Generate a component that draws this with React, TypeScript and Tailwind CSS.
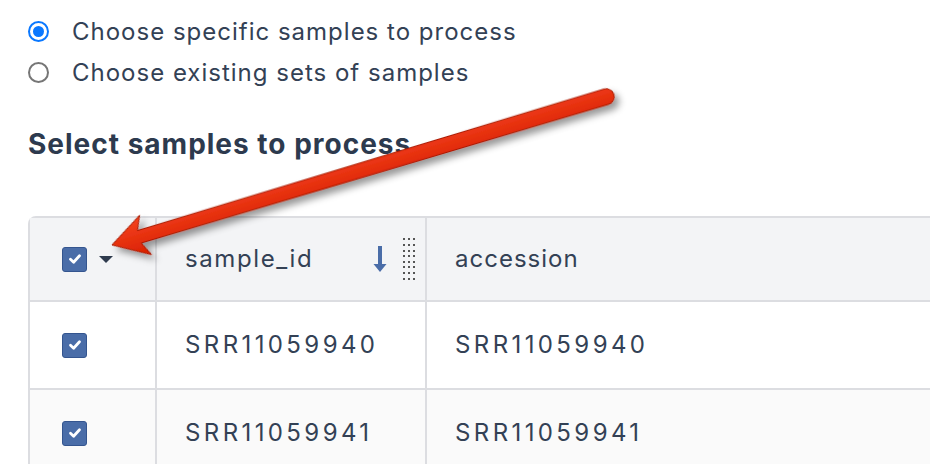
import { useState } from 'react';

const rows = [
  { id: 'SRR11059940', accession: 'SRR11059940' },
  { id: 'SRR11059941', accession: 'SRR11059941' },
];

function CheckBox() {
  return (
    <span className="flex h-[25px] w-[25px] items-center justify-center rounded-[3px] border border-[#34558f] bg-[#4a6da8]">
      <svg width="16" height="16" viewBox="0 0 16 16">
        <path d="M3.5 8.3 L6.6 11.2 L12.5 4.8" fill="none" stroke="white" strokeWidth="2.8" strokeLinecap="round" strokeLinejoin="round" />
      </svg>
    </span>
  );
}

function Radio({ checked }: { checked: boolean }) {
  return checked ? (
    <span className="flex h-[21px] w-[21px] items-center justify-center rounded-full border-[2.5px] border-[#0a78ff]">
      <span className="h-[11px] w-[11px] rounded-full bg-[#0a78ff]" />
    </span>
  ) : (
    <span className="h-[21px] w-[21px] rounded-full border-2 border-[#767676]" />
  );
}

function DragHandle() {
  return (
    <div className="grid grid-cols-3 gap-x-[3px] gap-y-[3.6px]">
      {Array.from({ length: 24 }).map((_, i) => (
        <span key={i} className="h-[2px] w-[2px] bg-[#555]" />
      ))}
    </div>
  );
}

function RedArrow() {
  // tip at (112,245), tail towards (606,97)
  return (
    <svg className="pointer-events-none absolute inset-0" width="930" height="464">
      <defs>
        <linearGradient id="arrowFill" x1="0" y1="0" x2="0" y2="1">
          <stop offset="0" stopColor="#f5431f" />
          <stop offset="1" stopColor="#d81f00" />
        </linearGradient>
        <filter id="arrowShadow" x="-10%" y="-30%" width="130%" height="180%">
          <feDropShadow dx="3" dy="6" stdDeviation="3.5" floodColor="#000" floodOpacity="0.4" />
        </filter>
      </defs>
      <g transform="translate(112 245) rotate(-16.7)" filter="url(#arrowShadow)">
        <path
          d="M0 0 L35 -20.5 L28.5 -6.5 L516 -8 A8 8 0 0 1 516 8 L28.5 6.5 L35 20.5 Z"
          fill="url(#arrowFill)"
          stroke="#a81900"
          strokeWidth="1"
          strokeLinejoin="round"
        />
      </g>
    </svg>
  );
}

export default function App() {
  const [mode, setMode] = useState('specific');

  return (
    <div
      className="relative h-[464px] w-[930px] overflow-hidden bg-white text-[#334155]"
      style={{ fontFamily: 'Inter, "Noto Sans", sans-serif' }}
    >
      <div className="pl-7 pt-[11px]">
        {/* Mode */}
        <div className="flex h-[41px] cursor-pointer items-center gap-[23px]" onClick={() => setMode('specific')}>
          <Radio checked={mode === 'specific'} />
          <span className="text-[24px] tracking-[1px]">Choose specific samples to process</span>
        </div>
        <div className="flex h-[41px] cursor-pointer items-center gap-[23px]" onClick={() => setMode('sets')}>
          <Radio checked={mode === 'sets'} />
          <span className="text-[24px] tracking-[1px]">Choose existing sets of samples</span>
        </div>

        <h2 className="mt-[33px] h-[36px] text-[28px] font-bold leading-[36px] tracking-[1px] text-[#2d3a4e]">
          Select samples to process
        </h2>

        {/* Table */}
        <div className="mt-[54px] w-[1000px] rounded-tl-lg border-l-2 border-t-2 border-[#dcdde1]">
          <div className="flex h-[84px] border-b-2 border-[#dcdde1] bg-[#f3f4f6]">
            <div className="flex w-[127px] items-center gap-[11px] border-r-2 border-[#dcdde1] pl-8">
              <CheckBox />
              <svg width="16" height="9" viewBox="0 0 16 9">
                <path d="M1 1 L15 1 L8 8 Z" fill="#2f3b4e" />
              </svg>
            </div>
            <div className="flex w-[270px] items-center border-r-2 border-[#dcdde1] pl-7 pr-[10px]">
              <span className="flex-1 text-[24px] tracking-[1.6px]">sample_id</span>
              <svg width="14" height="28" viewBox="0 0 14 28" className="mr-4">
                <path d="M5 1 H9 V19 H13.5 L7 27 L0.5 19 H5 Z" fill="#4a6da8" />
              </svg>
              <DragHandle />
            </div>
            <div className="flex flex-1 items-center pl-7">
              <span className="text-[24px] tracking-[1px]">accession</span>
            </div>
          </div>
          {rows.map((r, i) => (
            <div
              key={r.id}
              className={`flex h-[88px] border-b-2 border-[#dcdde1] ${i % 2 === 1 ? 'bg-[#fafafa]' : 'bg-white'}`}
            >
              <div className="flex w-[127px] items-center border-r-2 border-[#dcdde1] pl-8">
                <CheckBox />
              </div>
              <div className="flex w-[270px] items-center border-r-2 border-[#dcdde1] pl-7">
                <span className="text-[24px] tracking-[3.4px]">{r.id}</span>
              </div>
              <div className="flex flex-1 items-center pl-7">
                <span className="text-[24px] tracking-[3.4px]">{r.accession}</span>
              </div>
            </div>
          ))}
        </div>
      </div>

      <RedArrow />
    </div>
  );
}
